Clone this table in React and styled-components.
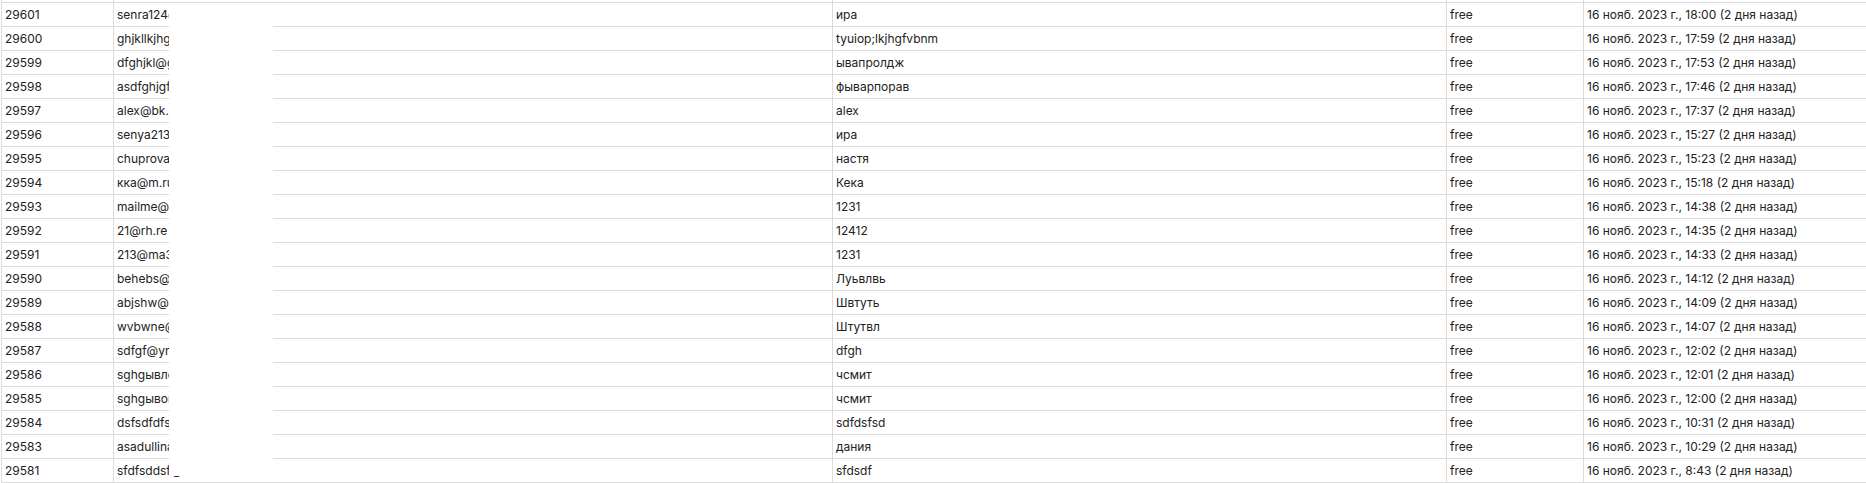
import React from "react";
import styled, { createGlobalStyle } from "styled-components";

const GlobalStyle = createGlobalStyle`
  html, body {
    margin: 0;
    padding: 0;
    background: #ffffff;
    overflow: hidden;
  }
  body {
    font-family: Inter, "Noto Sans", "Liberation Sans", sans-serif;
  }
`;

// Data
const users = [
  { id: 29601, email: "senra124@gmail.com", name: "ира", plan: "free", time: "18:00" },
  { id: 29600, email: "ghjkllkjhgfd@mail.ru", name: "tyuiop;lkjhgfvbnm", plan: "free", time: "17:59" },
  { id: 29599, email: "dfghjkl@gmail.com", name: "ывапролдж", plan: "free", time: "17:53" },
  { id: 29598, email: "asdfghjgf@mail.ru", name: "фыварпорав", plan: "free", time: "17:46" },
  { id: 29597, email: "alex@bk.ru", name: "alex", plan: "free", time: "17:37" },
  { id: 29596, email: "senya2131@mail.ru", name: "ира", plan: "free", time: "15:27" },
  { id: 29595, email: "chuprova.n@mail.ru", name: "настя", plan: "free", time: "15:23" },
  { id: 29594, email: "кка@m.ru", name: "Кека", plan: "free", time: "15:18" },
  { id: 29593, email: "mailme@mail.ru", name: "1231", plan: "free", time: "14:38" },
  { id: 29592, email: "21@rh.re", name: "12412", plan: "free", time: "14:35" },
  { id: 29591, email: "213@ma3.ru", name: "1231", plan: "free", time: "14:33" },
  { id: 29590, email: "behebs@mail.ru", name: "Луьвлвь", plan: "free", time: "14:12" },
  { id: 29589, email: "abjshw@gmail.com", name: "Швтуть", plan: "free", time: "14:09" },
  { id: 29588, email: "wvbwne@mail.ru", name: "Штутвл", plan: "free", time: "14:07" },
  { id: 29587, email: "sdfgf@ymail.com", name: "dfgh", plan: "free", time: "12:02" },
  { id: 29586, email: "sghgывлоа@mail.ru", name: "чсмит", plan: "free", time: "12:01" },
  { id: 29585, email: "sghgывоп@mail.ru", name: "чсмит", plan: "free", time: "12:00" },
  { id: 29584, email: "dsfsdfdfsd@mail.ru", name: "sdfdsfsd", plan: "free", time: "10:31" },
  { id: 29583, email: "asadullina@mail.ru", name: "дания", plan: "free", time: "10:29" },
  { id: 29581, email: "sfdfsddsf@mail.ru", name: "sfdsdf", plan: "free", time: "8:43" },
];

const App = () => {
  return (
    <>
      <GlobalStyle />
      <Viewport>
        <Table>
          <colgroup>
            <col style={{ width: 112 }} />
            <col style={{ width: 719 }} />
            <col style={{ width: 614 }} />
            <col style={{ width: 137 }} />
            <col />
          </colgroup>
          <tbody>
            {/* row scrolled out of view above */}
            <Row>
              <Cell />
              <Cell />
              <Cell />
              <Cell />
              <Cell />
            </Row>
            {users.map((u) => (
              <Row key={u.id}>
                <Cell>{u.id}</Cell>
                <Cell>{u.email}</Cell>
                <Cell>{u.name}</Cell>
                <Cell>{u.plan}</Cell>
                <Cell>16 нояб. 2023 г., {u.time} (2 дня назад)</Cell>
              </Row>
            ))}
          </tbody>
        </Table>
        {/* hidden emails */}
        <Redaction />
      </Viewport>
    </>
  );
};

const Viewport = styled.div`
  position: relative;
  height: 483px;
  overflow: hidden;
  padding-left: 1px;
`;

const Table = styled.table`
  width: 1960px;
  table-layout: fixed;
  border-collapse: collapse;
  margin-top: -22px;
  color: #222222;
  font-size: 12px;
`;

const Row = styled.tr`
  height: 24px;
`;

const Cell = styled.td`
  border: 1px solid #dcdcdc;
  padding: 0 3px;
  white-space: nowrap;
  overflow: hidden;
  vertical-align: middle;
  line-height: 22px;
`;

const Redaction = styled.div`
  position: absolute;
  left: 169px;
  top: 4px;
  width: 104px;
  height: 472px;
  background: #ffffff;
`;

export default App;
